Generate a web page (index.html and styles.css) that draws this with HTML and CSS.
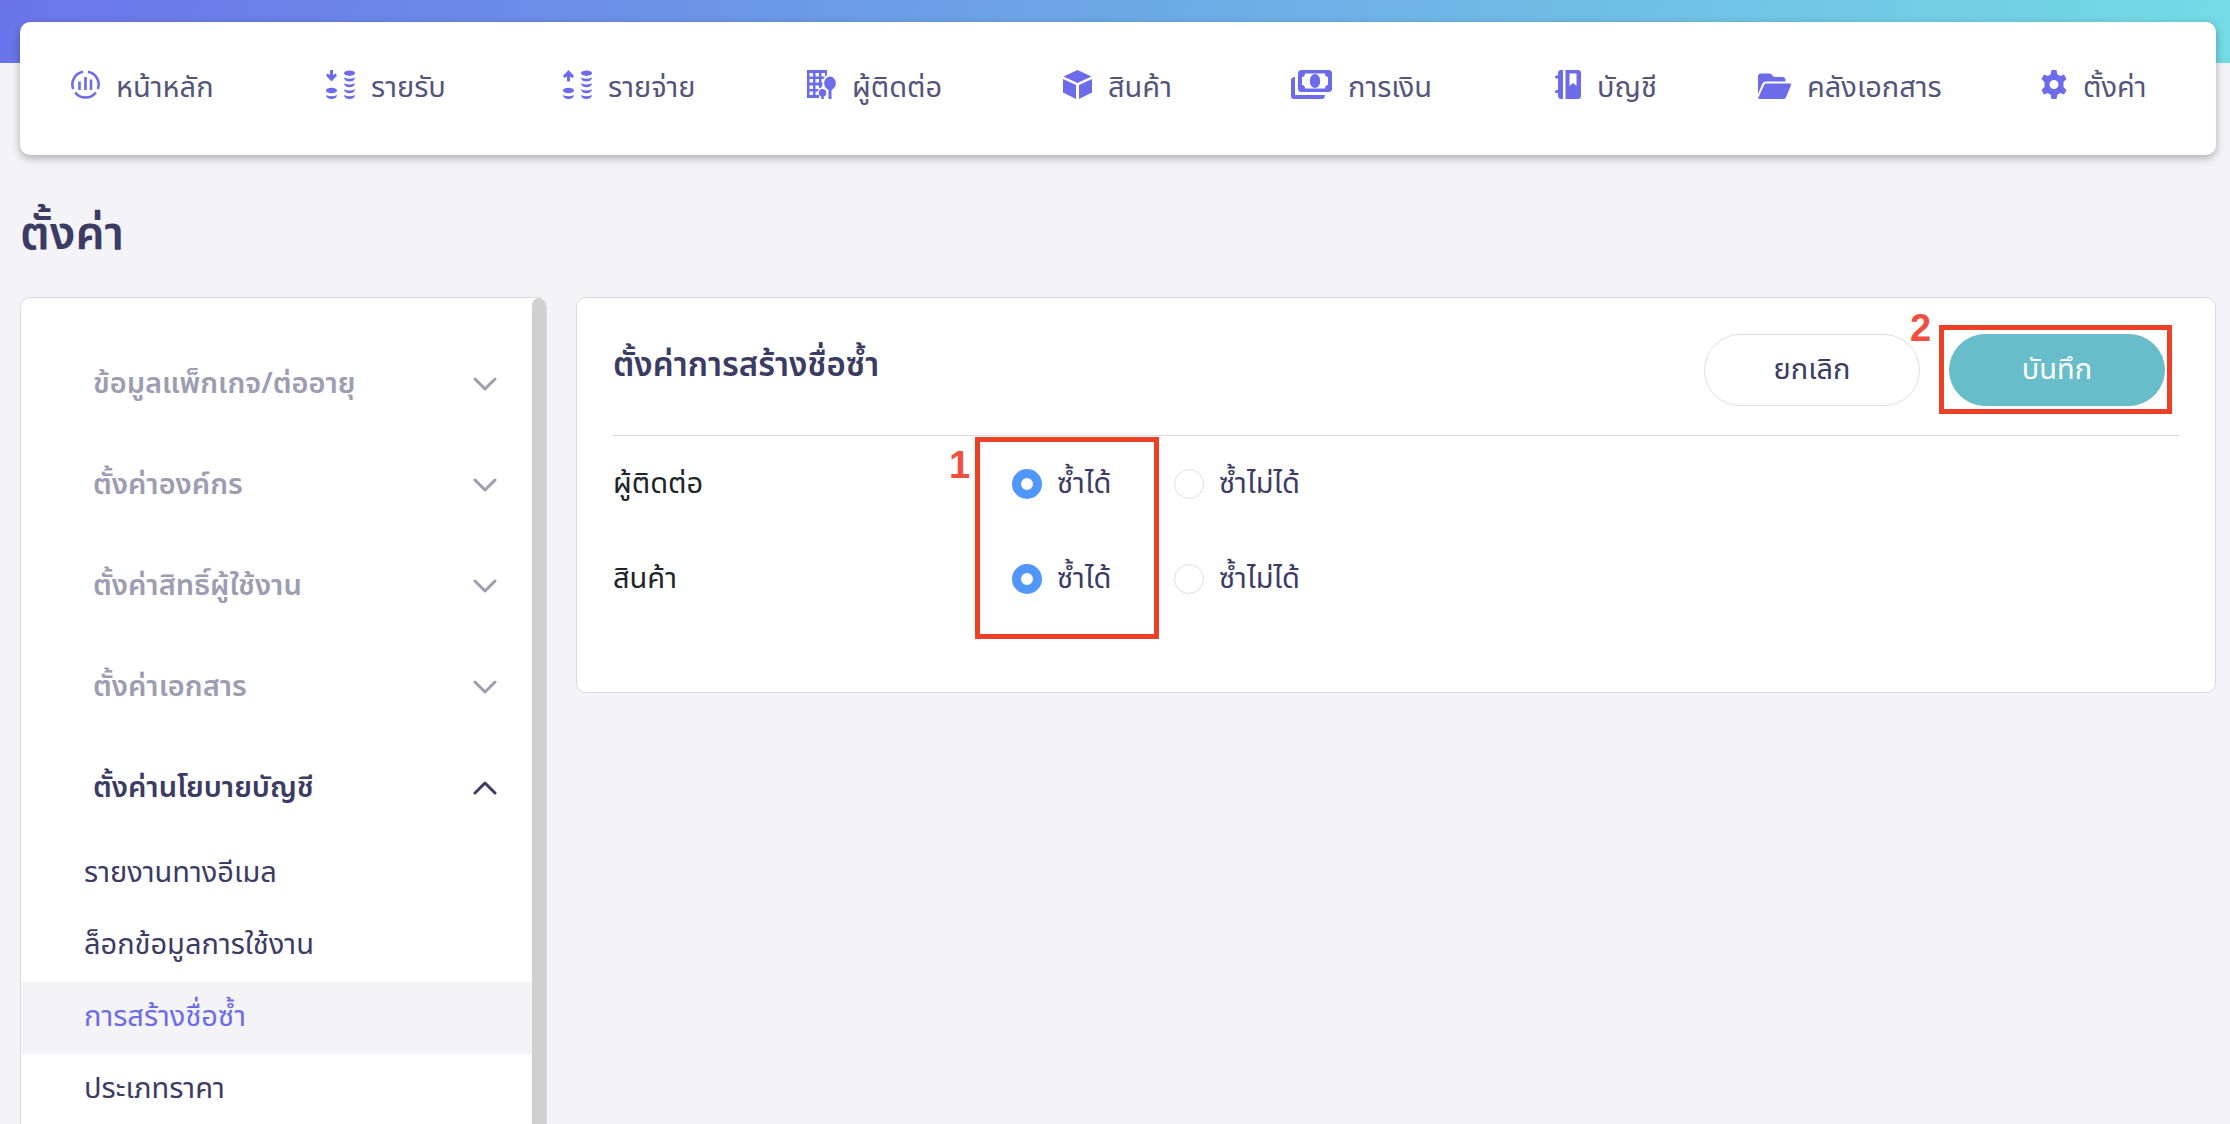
FILE: index.html
```html
<!DOCTYPE html>
<html lang="th">
<head>
    <meta charset="utf-8">
    <meta name="viewport" content="width=device-width, initial-scale=1">
    <title>ตั้งค่า</title>
    <link rel="stylesheet" href="styles.css">
</head>
<body>
    <header class="header">
        <nav class="navbar">
            <a class="nav-item" href="#">
                <svg width="29" height="29" viewBox="0 0 29 29" fill="none" stroke="currentColor">
                    <path stroke-width="2.6" d="M12 1.7A13 13 0 0 0 2.2 19M17 1.7A13 13 0 0 1 26.8 19M4.2 22.5A13 13 0 0 0 24.8 22.5" />
                    <path stroke-width="2.6" d="M8.5 11.5V20M14.5 7v13M20 9.5V20" />
                </svg>
                <span>หน้าหลัก</span>
            </a>
            <a class="nav-item" href="#">
                <svg width="29" height="29" viewBox="0 0 29 29" fill="currentColor">
                    <path d="M4 0h3v5l2.5-1.5L11 5.500 5.500 11.500 0 5.500 1.500 3.500 4 5z" />
                    <ellipse cx="5.500" cy="20.500" rx="5.500" ry="2.700" />
                    <ellipse cx="23.500" cy="3.200" rx="5.500" ry="2.700" />
                    <path d="M0 25q5.500 2.500 11 0-.5 4-5.500 4T0 25zM18 7.500q5.500 2.500 11 0-.5 4-5.500 4t-5.500-4zM18 13.300q5.500 2.500 11 0-.5 4-5.500 4t-5.500-4zM18 19.200q5.500 2.500 11 0-.5 4-5.500 4t-5.500-4zM18 25q5.500 2.500 11 0-.5 4-5.500 4t-5.500-4z" />
                </svg>
                <span>รายรับ</span>
            </a>
            <a class="nav-item" href="#">
                <svg width="29" height="29" viewBox="0 0 29 29" fill="currentColor">
                    <path d="M4 11.500h3v-5L9.500 8 11 6 5.500 0 0 6l1.500 2L4 6.500z" />
                    <ellipse cx="5.500" cy="20.500" rx="5.500" ry="2.700" />
                    <ellipse cx="23.500" cy="3.200" rx="5.500" ry="2.700" />
                    <path d="M0 25q5.500 2.500 11 0-.5 4-5.500 4T0 25zM18 7.500q5.500 2.500 11 0-.5 4-5.500 4t-5.500-4zM18 13.300q5.500 2.500 11 0-.5 4-5.500 4t-5.500-4zM18 19.200q5.500 2.500 11 0-.5 4-5.500 4t-5.500-4zM18 25q5.500 2.500 11 0-.5 4-5.500 4t-5.500-4z" />
                </svg>
                <span>รายจ่าย</span>
            </a>
            <a class="nav-item" href="#">
                <svg width="29" height="29" viewBox="0 0 29 29" fill="currentColor">
                    <path d="M0 0h20v28H0z" />
                    <path fill="#fff" d="M2.500 3h3.500v3.500H2.500zM8.500 3H12v3.500H8.500zM14.500 3H18v3.500h-3.500zM2.500 9h3.500v3.500H2.500zM8.500 9H12v3.500H8.500zM14.500 9H18v3.500h-3.500zM2.500 15.500h3.500V19H2.500zM8.500 15.500H12V19H8.500zM2.500 21.500h3.500V25H2.500zM8.500 21.500H12V25H8.500z" />
                    <path fill="#fff" d="M23 4.500c-4.500 0-7.500 4-7.500 9.500l-1 3.500c-3.500.5-5 5-2.500 8v3.500h17V4.500z" />
                    <ellipse cx="23" cy="13.200" rx="5.800" ry="6.800" />
                    <path d="M21.500 18h3v11h-3zM14.300 25h2.500v4h-2.500z" />
                    <ellipse cx="15.500" cy="22.800" rx="3.700" ry="3.900" />
                </svg>
                <span>ผู้ติดต่อ</span>
            </a>
            <a class="nav-item" href="#">
                <svg width="29" height="29" viewBox="0 0 29 29" fill="currentColor">
                    <path d="M14.500 0 28.500 6.500 14.500 13 .5 6.500zM0 9l13 6v14L0 22.500zM29 9l-13 6v14l13-6.500z" />
                </svg>
                <span>สินค้า</span>
            </a>
            <a class="nav-item" href="#">
                <svg width="41" height="29" viewBox="0 0 41 29" fill="currentColor">
                    <path d="M4 7v18h30c0 2-1 4-3 4H3c-2 0-3-1-3-3V10c0-2 2-3 4-3z" />
                    <rect x="7" width="34" height="22" rx="3.500" />
                    <path fill="#fff" d="M14 3.500h20c0 2 1 3.500 3 3.500v8c-2 0-3 1.500-3 3.500H14c0-2-1-3.500-3-3.500V7c2 0 3-1.500 3-3.500z" />
                    <ellipse cx="24" cy="11" rx="5.200" ry="7" />
                </svg>
                <span>การเงิน</span>
            </a>
            <a class="nav-item" href="#">
                <svg width="26" height="29" viewBox="0 0 26 29" fill="currentColor">
                    <path d="M8 0v29H6c-2 0-3-1.500-3-3v-3H1.500a1.500 1.500 0 0 1 0-3H3V8.500H1.500a1.500 1.500 0 0 1 0-3H3V3c0-2 1-3 3-3z" />
                    <path d="M10.500 0H23c2 0 3 1 3 3v23c0 2-1 3-3 3H10.500z" />
                    <path fill="#fff" d="M14.500 3.500h7v12.500L18 13l-3.500 3z" />
                </svg>
                <span>บัญชี</span>
            </a>
            <a class="nav-item" href="#">
                <svg width="33" height="29" viewBox="0 0 33 29" fill="currentColor">
                    <path d="M0 24V6.500c0-2 1-3 3-3h8.500c2.500 0 3 3.500 5.500 3.500h7.500c2 0 3 1.500 3 3.500v1H8c-2 0-3 1-4 3z" />
                    <path d="M8.500 13.500H32c1 0 1.300.8 1 1.700l-5 12c-.5 1.200-1.300 1.800-2.500 1.800H1.500c-1 0-1.500-.8-1-1.800l5.500-12c.5-1.200 1.300-1.700 2.500-1.700z" />
                </svg>
                <span>คลังเอกสาร</span>
            </a>
            <a class="nav-item" href="#">
                <svg width="26" height="29" viewBox="0 0 26 29" fill="currentColor">
                    <path fill-rule="evenodd" d="M10.500 0h5l.8 4.300 3 1.700 3.700-1.500L25.500 9 22.500 12v5l3 3-2.500 4.500-3.700-1.500-3 1.700-.8 4.300h-5l-.8-4.300-3-1.700L3 24.500.5 20l3-3v-5l-3-3L3 4.500 6.700 6l3-1.700zM13 10a4.500 4.500 0 1 0 0 9 4.500 4.500 0 0 0 0-9z" />
                </svg>
                <span>ตั้งค่า</span>
            </a>
        </nav>
    </header>

    <h1 class="page-title">ตั้งค่า</h1>

    <div class="content">
        <aside class="sidebar">
            <div class="menu">
                <button type="button" class="menu-head">ข้อมูลแพ็กเกจ/ต่ออายุ
                    <svg class="chevron" viewBox="0 0 24 14"><path d="M2 2l10 10L22 2" /></svg>
                </button>
                <button type="button" class="menu-head">ตั้งค่าองค์กร
                    <svg class="chevron" viewBox="0 0 24 14"><path d="M2 2l10 10L22 2" /></svg>
                </button>
                <button type="button" class="menu-head">ตั้งค่าสิทธิ์ผู้ใช้งาน
                    <svg class="chevron" viewBox="0 0 24 14"><path d="M2 2l10 10L22 2" /></svg>
                </button>
                <button type="button" class="menu-head">ตั้งค่าเอกสาร
                    <svg class="chevron" viewBox="0 0 24 14"><path d="M2 2l10 10L22 2" /></svg>
                </button>
                <button type="button" class="menu-head open">ตั้งค่านโยบายบัญชี
                    <svg class="chevron" viewBox="0 0 24 14"><path d="M2 12L12 2l10 10" /></svg>
                </button>
                <a class="menu-link" href="#">รายงานทางอีเมล</a>
                <a class="menu-link" href="#">ล็อกข้อมูลการใช้งาน</a>
                <a class="menu-link active" href="#">การสร้างชื่อซ้ำ</a>
                <a class="menu-link" href="#">ประเภทราคา</a>
            </div>
            <div class="scrollbar"></div>
        </aside>

        <main class="panel">
            <div class="panel-head">
                <h2 class="panel-title">ตั้งค่าการสร้างชื่อซ้ำ</h2>
                <div class="actions">
                    <button type="button" class="btn">ยกเลิก</button>
                    <div class="marked marked-save">
                        <button type="button" class="btn btn-save">บันทึก</button>
                        <span class="step">2</span>
                    </div>
                </div>
            </div>
            <div class="options">
                <div class="labels">
                    <div class="row" id="contact">ผู้ติดต่อ</div>
                    <div class="row" id="product">สินค้า</div>
                </div>
                <div class="marked marked-radio">
                    <label class="row"><input type="radio" class="radio" name="contact" aria-describedby="contact" checked>ซ้ำได้</label>
                    <label class="row"><input type="radio" class="radio" name="product" aria-describedby="product" checked>ซ้ำได้</label>
                    <span class="step">1</span>
                </div>
                <div>
                    <label class="row"><input type="radio" class="radio" name="contact" aria-describedby="contact">ซ้ำไม่ได้</label>
                    <label class="row"><input type="radio" class="radio" name="product" aria-describedby="product">ซ้ำไม่ได้</label>
                </div>
            </div>
        </main>
    </div>
</body>
</html>
```
FILE: styles.css
```css
* {
    box-sizing: border-box;
}

body {
    margin: 0;
    height: 100vh;
    overflow: hidden;
    display: flex;
    flex-direction: column;
    background: #f3f3f8;
    color: #3b3b64;
    font-family: "Noto Sans Thai", "Open Sans", "Noto Sans", sans-serif;
    font-size: 29px;
    line-height: 40px;
}

button {
    font: inherit;
    color: inherit;
    cursor: pointer;
}

a {
    color: inherit;
    text-decoration: none;
}

/* top menu */
.header {
    padding: 22px 14px 0 20px;
    background: linear-gradient(100deg, #6b74ea, #6ca8e6 50%, #74dbe5) no-repeat;
    background-size: 100% 63px;
}

.navbar {
    display: grid;
    grid-template-columns: 255fr 237fr 244fr 256fr 228fr 264fr 203fr 283fr 109fr;
    padding: 48px 66px 49px 51px;
    background: #fff;
    border-radius: 10px;
    box-shadow: 0 3px 8px rgba(0, 0, 0, .3);
}

.nav-item {
    display: flex;
    align-items: flex-start;
    gap: 16px;
    color: #55557a;
    line-height: 36px;
    white-space: nowrap;
}

.nav-item svg {
    flex: none;
    color: #6c6ceb;
}

.page-title {
    margin: 48px 20px 30px;
    font-size: 46px;
    line-height: 64px;
    font-weight: 600;
}

/* page body */
.content {
    flex: 1;
    min-height: 0;
    display: flex;
    align-items: flex-start;
    gap: 29px;
    padding: 0 14px 0 20px;
}

.sidebar {
    width: 527px;
    height: 100%;
    flex: none;
    display: flex;
    overflow: hidden;
    background: #fff;
    border: 1px solid #dadae5;
    border-bottom: 0;
    border-radius: 10px 10px 0 0;
}

.menu {
    flex: 1;
    padding-top: 35px;
}

.scrollbar {
    width: 14px;
    background: #d0d0d0;
    border-radius: 7px 7px 0 0;
}

.menu-head {
    display: flex;
    align-items: center;
    justify-content: space-between;
    width: 100%;
    height: 101px;
    padding: 0 35px 0 72px;
    border: 0;
    background: none;
    color: #9d9db2;
    font-weight: 600;
}

.menu-head.open {
    color: #3b3b64;
}

.chevron {
    width: 24px;
    height: 14px;
    fill: none;
    stroke: currentColor;
    stroke-width: 3;
    stroke-linecap: round;
    stroke-linejoin: round;
}

.menu-link {
    display: block;
    padding: 15px 63px 17px;
}

.menu-link.active {
    background: #f4f4f7;
    color: #6c6ceb;
}

.panel {
    flex: 1;
    padding: 36px;
    background: #fff;
    border: 1px solid #dadae5;
    border-radius: 10px;
}

.panel-head {
    display: flex;
    align-items: flex-start;
    justify-content: space-between;
    padding-bottom: 29px;
    border-bottom: 1px solid #dadae5;
}

.panel-title {
    margin: 12px 0 0;
    font-size: 33px;
    line-height: 40px;
    font-weight: 600;
}

.actions {
    display: flex;
    gap: 29px;
    padding-right: 14px;
}

.btn {
    display: block;
    width: 216px;
    height: 72px;
    border: 1px solid #dedee8;
    border-radius: 36px;
    background: #fff;
}

.btn-save {
    border-color: #67bdc9;
    background: #67bdc9;
    color: #fff;
}

.options {
    display: flex;
    height: 220px;
}

.labels {
    width: 399px;
    color: #212529;
}

.row {
    display: flex;
    align-items: center;
    gap: 15px;
    height: 95px;
}

.radio {
    appearance: none;
    width: 30px;
    height: 30px;
    margin: 0;
    border: 1px solid #dedee8;
    border-radius: 50%;
}

.radio:checked {
    border: 9px solid #5196fa;
}

/* red step frames */
.marked {
    position: relative;
}

.marked-radio {
    width: 162px;
}

.marked::after {
    content: "";
    position: absolute;
    border: 5px solid #ec4126;
    pointer-events: none;
}

.marked-save::after {
    inset: -9px -7px -8px -10px;
}

.marked-radio::after {
    inset: 1px 15px 17px -37px;
}

.step {
    position: absolute;
    color: #ee4f3e;
    font: bold 38px/40px "Liberation Sans", Arial, sans-serif;
}

.marked-save .step {
    left: -39px;
    top: -26px;
}

.marked-radio .step {
    left: -63px;
    top: 9px;
}
```
